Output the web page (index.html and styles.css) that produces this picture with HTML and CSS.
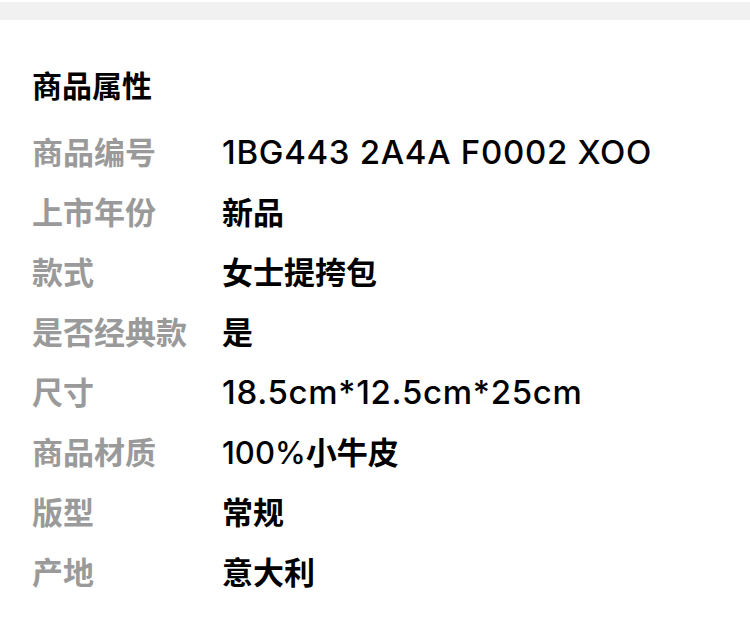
FILE: index.html
```html
<!DOCTYPE html>
<html lang="zh-CN">
<head>
    <meta charset="UTF-8">
    <meta name="viewport" content="width=device-width, initial-scale=1.0">
    <title>商品属性</title>
    <link rel="stylesheet" href="styles.css">
</head>
<body>
    <div class="top_bar"></div>

    <section class="attrs">
        <h2 class="attrs_title">商品属性</h2>
        <dl class="attr_list">
            <dt>商品编号</dt>
            <dd><span class="latin">1BG443 2A4A F0002 XOO</span></dd>
            <dt>上市年份</dt>
            <dd>新品</dd>
            <dt>款式</dt>
            <dd>女士提挎包</dd>
            <dt>是否经典款</dt>
            <dd>是</dd>
            <dt>尺寸</dt>
            <dd><span class="latin">18.5cm*12.5cm*25cm</span></dd>
            <dt>商品材质</dt>
            <dd><span class="latin small">100%</span>小牛皮</dd>
            <dt>版型</dt>
            <dd>常规</dd>
            <dt>产地</dt>
            <dd>意大利</dd>
        </dl>
    </section>
</body>
</html>
```

FILE: styles.css
```css
*{
    padding: 0;
    margin: 0;
    box-sizing: border-box;
    font-family: "Noto Sans CJK SC", "Noto Sans", sans-serif;
}
body{
    background: #fff;
    color: #000;
}
.top_bar{
    margin-top: 2px;
    height: 18px;
    background: #f1f1f1;
}
.attrs{
    padding: 0 32px;
}
.attrs_title{
    margin-top: 44px;
    height: 40px;
    line-height: 40px;
    font-size: 30px;
    font-weight: 700;
}
.attr_list{
    margin-top: 16px;
    display: grid;
    grid-template-columns: 190px 1fr;
    grid-auto-rows: 60px;
    align-items: center;
}
.attr_list dt{
    font-size: 31px;
    font-weight: 700;
    color: #9a9a9a;
}
.attr_list dd{
    font-size: 31px;
    font-weight: 700;
    color: #000;
}
.attr_list .latin{
    font-family: Inter, "Noto Sans CJK SC", sans-serif;
    font-size: 33px;
    font-weight: 500;
    letter-spacing: 0.7px;
}
.attr_list .latin.small{
    font-size: 31px;
    letter-spacing: 0;
}
```
